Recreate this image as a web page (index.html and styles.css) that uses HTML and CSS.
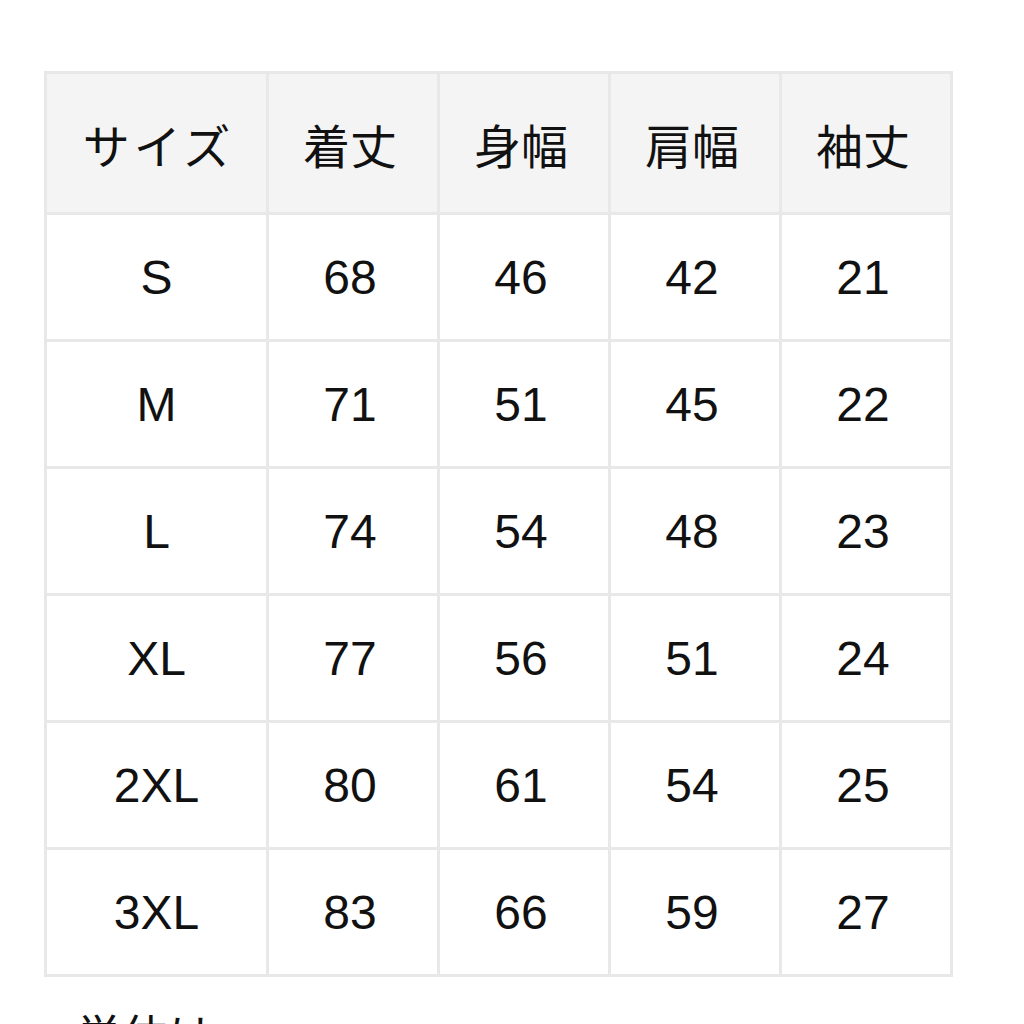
FILE: index.html
```html
<!DOCTYPE html>
<html lang="ja">
<head>
<meta charset="utf-8">
<link rel="stylesheet" href="styles.css">
</head>
<body>
<div class="page">
  <table class="size-table">
    <thead>
      <tr class="head-row">
        <th class="col-size"><span class="kana">サイズ</span></th>
        <th>着丈</th>
        <th>身幅</th>
        <th>肩幅</th>
        <th>袖丈</th>
      </tr>
    </thead>
    <tbody>
      <tr><td>S</td><td>68</td><td>46</td><td>42</td><td>21</td></tr>
      <tr><td>M</td><td>71</td><td>51</td><td>45</td><td>22</td></tr>
      <tr><td>L</td><td>74</td><td>54</td><td>48</td><td>23</td></tr>
      <tr><td>XL</td><td>77</td><td>56</td><td>51</td><td>24</td></tr>
      <tr><td>2XL</td><td>80</td><td>61</td><td>54</td><td>25</td></tr>
      <tr><td>3XL</td><td>83</td><td>66</td><td>59</td><td>27</td></tr>
    </tbody>
  </table>
  <p class="note">単位はcm</p>
</div>
</body>
</html>
```

FILE: styles.css
```css
html, body {
  margin: 0;
  padding: 0;
  background: #ffffff;
}

.page {
  padding: 71px 0 0 44px;
  font-family: "Liberation Sans", "Noto Sans CJK JP", sans-serif;
  color: #111111;
}

.size-table {
  border-collapse: collapse;
  width: 909px;
  table-layout: fixed;
}

.size-table th,
.size-table td {
  border: 3px solid #e8e8e8;
  text-align: center;
  vertical-align: middle;
  padding: 0 6px 0 0;
  font-size: 48px;
  font-weight: normal;
}

.size-table th:first-child,
.size-table td:first-child {
  padding: 0;
}

.size-table th {
  background: #f4f4f4;
  height: 138px;
  font-family: "Noto Sans CJK JP", sans-serif;
  font-size: 47px;
}

.size-table td {
  height: 124px;
}

.size-table .col-size {
  width: 219px;
}

.kana {
  letter-spacing: 4px;
  margin-right: -4px;
}

.note {
  margin: 22px 0 0 32px;
  font-family: "Noto Sans CJK JP", sans-serif;
  font-size: 46px;
  line-height: 1.5;
}
```
